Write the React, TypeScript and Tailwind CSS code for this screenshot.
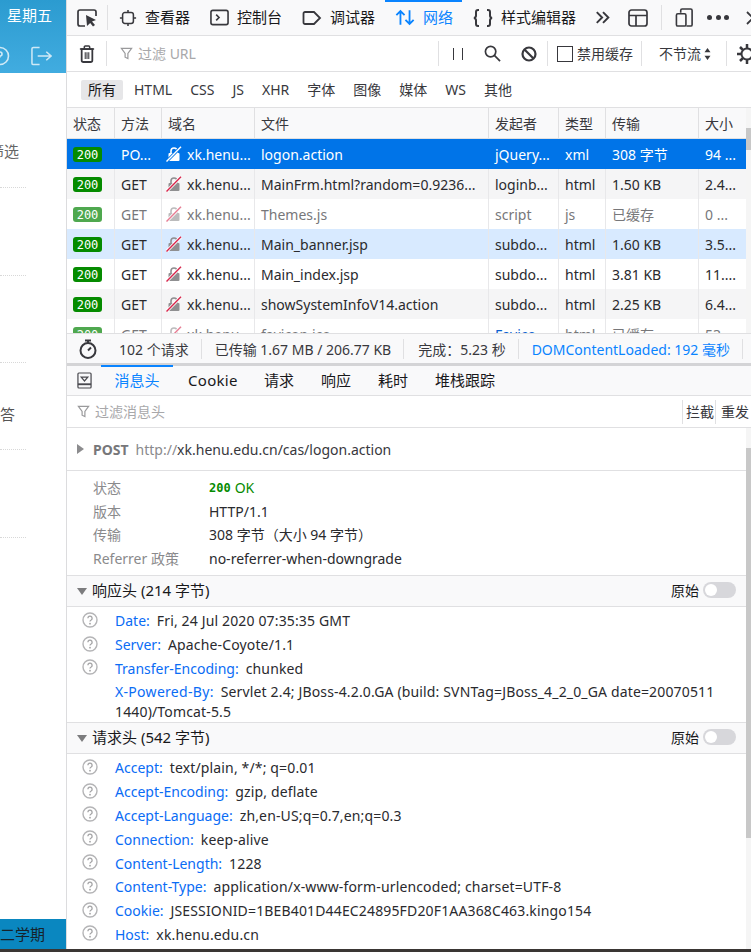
import React from "react";

const rows = [
  { method: "PO...", file: "logon.action", cause: "jQuery...", type: "xml", size: "308 字节", total: "94 ...", tone: "selected" },
  { method: "GET", file: "MainFrm.html?random=0.9236...", cause: "loginb...", type: "html", size: "1.50 KB", total: "2.4...", tone: "odd" },
  { method: "GET", file: "Themes.js", cause: "script", type: "js", size: "已缓存", total: "0 ...", tone: "cached" },
  { method: "GET", file: "Main_banner.jsp", cause: "subdo...", type: "html", size: "1.60 KB", total: "3.5...", tone: "hover" },
  { method: "GET", file: "Main_index.jsp", cause: "subdo...", type: "html", size: "3.81 KB", total: "11....", tone: "plain" },
  { method: "GET", file: "showSystemInfoV14.action", cause: "subdo...", type: "html", size: "2.25 KB", total: "6.4...", tone: "odd" },
  { method: "GET", file: "favicon.ico", cause: "Favico...", type: "html", size: "已缓存", total: "53...", tone: "cached" },
];

const responseHeaders = [
  ["Date:", "Fri, 24 Jul 2020 07:35:35 GMT"],
  ["Server:", "Apache-Coyote/1.1"],
  ["Transfer-Encoding:", "chunked"],
];

const requestHeaders = [
  ["Accept:", "text/plain, */*; q=0.01"],
  ["Accept-Encoding:", "gzip, deflate"],
  ["Accept-Language:", "zh,en-US;q=0.7,en;q=0.3"],
  ["Connection:", "keep-alive"],
  ["Content-Length:", "1228"],
  ["Content-Type:", "application/x-www-form-urlencoded; charset=UTF-8"],
  ["Cookie:", "JSESSIONID=1BEB401D44EC24895FD20F1AA368C463.kingo154"],
  ["Host:", "xk.henu.edu.cn"],
  ["Referer:", "http://xk.henu.edu.cn/"],
];

function Sep() {
  return <div className="w-px h-[25px] bg-[#e0e0e2] shrink-0" />;
}

function Funnel({ className }: { className: string }) {
  return (
    <svg viewBox="0 0 14 14" className={className} fill="none" stroke="#9a9a9c" strokeWidth="1.3">
      <path d="M1.5 1.5h11L8.5 7v5.5l-3-1.5V7z" />
    </svg>
  );
}

function Tool({ icon, label, active }: { icon: React.ReactNode; label: string; active?: boolean }) {
  return (
    <div className={`flex items-center gap-[8px] h-full ${active ? "text-[#0a84ff]" : "text-[#18181a]"}`}>
      {icon}
      <span className="text-[15px] whitespace-nowrap">{label}</span>
    </div>
  );
}

function Lock({ light, white }: { light?: boolean; white?: boolean }) {
  const body = white ? "#fff" : "#8f8f91";
  return (
    <svg viewBox="0 0 16 16" className={`w-[16px] h-[16px] shrink-0 ${light ? "opacity-60" : ""}`}>
      <path d="M5 7V5a3 3 0 0 1 6 0v2" fill="none" stroke={body} strokeWidth="1.6" />
      <rect x="2.5" y="7" width="11" height="8" rx="1" fill={body} />
      <path d="M0.5 15.5 15 0.8" stroke={white ? "#0074e8" : "#fff"} strokeWidth="3" />
      <path d="M0.5 15.5 15 0.8" stroke={white ? "#fff" : "#d7264c"} strokeWidth="1.4" />
    </svg>
  );
}

function Hint() {
  return (
    <svg viewBox="0 0 16 16" className="w-[16px] h-[16px] -mt-[2px] shrink-0" fill="none">
      <circle cx="8" cy="8" r="7" stroke="#b4b4b6" strokeWidth="1.4" />
      <path d="M5.9 6.2a2.1 2.1 0 1 1 3.2 1.8c-.7.4-1.1.8-1.1 1.6" stroke="#a4a4a6" strokeWidth="1.3" />
      <circle cx="8" cy="11.7" r=".9" fill="#a4a4a6" />
    </svg>
  );
}

function Toggle() {
  return <div className="w-[33px] h-[16px] rounded-full bg-[#d7d7db] p-[2px]"><div className="w-[12px] h-[12px] rounded-full bg-white" /></div>;
}

function Section({ title }: { title: string }) {
  return (
    <div className="h-[32px] shrink-0 flex items-center bg-[#f9f9fa] border-y border-[#e0e0e2] pl-[10px] pr-[10px] pb-[2px] text-[#18181a]">
      <svg viewBox="0 0 10 7" className="w-[10px] h-[7px] mr-[5px] mt-[2px]"><path d="M0 0h10L5 7z" fill="#7c7c7e" /></svg>
      <span className="flex-1 text-[15px]">{title}</span>
      <span className="mr-[4px] text-[14px]">原始</span>
      <Toggle />
    </div>
  );
}

function HeaderRow({ name, value }: { name: string; value: string }) {
  return (
    <div className="h-[23.8px] shrink-0 flex items-center pl-[15px] text-[14px] whitespace-nowrap">
      <Hint />
      <span className="ml-[17px] text-[#0a6cf5]">{name}</span>
      <span className="ml-[7px] text-[#2a2a2e] tracking-[0.15px]">{value}</span>
    </div>
  );
}

export default function App() {
  return (
    <div
      className="w-[751px] h-[952px] overflow-hidden flex flex-col bg-white"
      style={{ fontFamily: '"Noto Sans", "Noto Sans CJK SC", sans-serif' }}
    >
      <div className="flex flex-1 min-h-0">
        {/* left page, mostly hidden by devtools */}
        <aside className="w-[66px] shrink-0 flex flex-col bg-white">
          <div className="h-[73px] bg-gradient-to-b from-[#2b9bd0] to-[#41ace0] text-white">
            <div className="h-[30px] flex items-center justify-end pr-[14px] text-[15px]">星期五</div>
            <div className="flex items-center justify-between h-[43px] pt-[8px] pr-[14px] -ml-[10px]">
              <svg viewBox="0 0 20 20" className="w-[20px] h-[20px]" fill="none" stroke="#cfe9f6" strokeWidth="1.6"><circle cx="10" cy="10" r="8.5" /><path d="M8 8a2 2 0 1 1 2 2v1.5" /></svg>
              <svg viewBox="0 0 22 20" className="w-[21px] h-[20px]" fill="none" stroke="#cfe9f6" strokeWidth="1.6"><path d="M9 1H2.5A1.5 1.5 0 0 0 1 2.5v15A1.5 1.5 0 0 0 2.5 19H9M7 10h14M16 5.5l5 4.5-5 4.5" /></svg>
            </div>
          </div>
          <div className="flex-1 flex flex-col">
            <div className="h-[115px] shrink-0 mr-[40px] border-b border-dotted border-[#d8d8d8] flex items-center justify-end pt-[43px] pr-[7px] text-[15px] text-[#666] overflow-hidden whitespace-nowrap">筛选</div>
            <div className="h-[88px] shrink-0 mr-[40px] border-b border-dotted border-[#d8d8d8]" />
            <div className="h-[87px] shrink-0 mr-[40px] border-b border-dotted border-[#d8d8d8]" />
            <div className="h-[87px] shrink-0 mr-[40px] border-b border-dotted border-[#d8d8d8] flex items-center justify-end pt-[17px] pr-[11px] text-[15px] text-[#555] overflow-hidden whitespace-nowrap">答</div>
            <div className="h-[88px] shrink-0 mr-[40px] border-b border-dotted border-[#d8d8d8]" />
            <div className="flex-1" />
            <div className="h-[30px] bg-[#0a87c0] flex items-center justify-end pr-[21px] text-[15px] text-[#16222a] overflow-hidden whitespace-nowrap">二学期</div>
          </div>
        </aside>

        {/* devtools */}
        <main className="flex-1 min-w-0 flex flex-col border-l border-[#dcdcde] overflow-hidden">
          <div className="h-[36px] shrink-0 flex items-center bg-[#f9f9fa] border-b border-[#e0e0e2] pl-[10px] overflow-hidden">
            <svg viewBox="0 0 20 20" className="w-[20px] h-[20px] shrink-0 mr-[10px]" fill="none"><path d="M8 18H3a2 2 0 0 1-2-2V4a2 2 0 0 1 2-2h14a2 2 0 0 1 2 2v4" stroke="#38383d" strokeWidth="1.7" /><path d="M9 7l10 5-4 1.5 3 3.5-2 1.5-2.8-3.5L10 18z" fill="#38383d" /></svg>
            <Sep />
            <div className="flex items-center h-full gap-[20px] ml-[11px] shrink-0">
              <Tool label="查看器" icon={<svg viewBox="0 0 20 20" className="w-[18px] h-[18px]" fill="none" stroke="#38383d" strokeWidth="1.7"><rect x="4" y="4" width="12" height="12" rx="2.5" /><path d="M10 1v3M10 16v3M1 10h3M16 10h3" /></svg>} />
              <Tool label="控制台" icon={<svg viewBox="0 0 20 20" className="w-[19px] h-[19px]" fill="none" stroke="#38383d" strokeWidth="1.7"><rect x="1" y="2.5" width="18" height="15" rx="2" /><path d="M6.5 7l3 3-3 3" /></svg>} />
              <Tool label="调试器" icon={<svg viewBox="0 0 20 20" className="w-[20px] h-[20px]" fill="none" stroke="#38383d" strokeWidth="1.8"><path d="M3 4h9l6 6-6 6H3a1.5 1.5 0 0 1-1.5-1.5v-9A1.5 1.5 0 0 1 3 4z" /></svg>} />
              <div className="relative h-full flex items-center">
                <div className="absolute top-0 left-[-10px] right-[-9px] h-[2px] bg-[#0a84ff]" />
                <Tool active label="网络" icon={<svg viewBox="0 0 22 20" className="w-[20px] h-[19px]" fill="none" stroke="#0a84ff" strokeWidth="2"><path d="M6 18V3M1.5 7.5 6 3l4.5 4.5M16 2v15M11.5 12.5 16 17l4.5-4.5" /></svg>} />
              </div>
              <Tool label="样式编辑器" icon={<svg viewBox="0 0 20 18" className="w-[20px] h-[18px]" fill="none" stroke="#38383d" strokeWidth="2"><path d="M6 1H5a2 2 0 0 0-2 2v3.5a2.5 2.5 0 0 1-2 2.5 2.5 2.5 0 0 1 2 2.5V15a2 2 0 0 0 2 2h1M14 1h1a2 2 0 0 1 2 2v3.5a2.5 2.5 0 0 0 2 2.5 2.5 2.5 0 0 0-2 2.5V15a2 2 0 0 1-2 2h-1" /></svg>} />
            </div>
            <svg viewBox="0 0 18 16" className="w-[16px] h-[15px] shrink-0 ml-[19px]" fill="none" stroke="#38383d" strokeWidth="2.2"><path d="M2 2l6 6-6 6M9 2l6 6-6 6" /></svg>
            <svg viewBox="0 0 20 18" className="w-[20px] h-[18px] shrink-0 ml-[17px]" fill="none" stroke="#38383d" strokeWidth="1.7"><rect x="1" y="1" width="18" height="16" rx="2.5" /><path d="M1 6.5h18M8 6.5V17" /></svg>
            <div className="ml-[13px]"><Sep /></div>
            <svg viewBox="0 0 20 20" className="w-[19px] h-[19px] shrink-0 ml-[13px]" fill="none" stroke="#38383d" strokeWidth="1.7"><path d="M6 5V2.5A1.5 1.5 0 0 1 7.5 1h9A1.5 1.5 0 0 1 18 2.5v15a1.5 1.5 0 0 1-1.5 1.5H12" /><rect x="1.5" y="6" width="10" height="13" rx="1.5" /></svg>
            <div className="flex gap-[3.5px] ml-[13px] shrink-0">
              <div className="w-[5px] h-[5px] rounded-full bg-[#38383d]" />
              <div className="w-[5px] h-[5px] rounded-full bg-[#38383d]" />
              <div className="w-[5px] h-[5px] rounded-full bg-[#38383d]" />
            </div>
            <svg viewBox="0 0 14 14" className="w-[14px] h-[14px] shrink-0 ml-[17px]" fill="none" stroke="#38383d" strokeWidth="1.8"><path d="M1 1l12 12M13 1 1 13" /></svg>
          </div>

          <div className="h-[36px] shrink-0 flex items-center border-b border-[#e0e0e2] pl-[12px] overflow-hidden">
            <svg viewBox="0 0 18 20" className="w-[16px] h-[20px] shrink-0 mr-[11px]" fill="none" stroke="#38383d" strokeWidth="1.7"><path d="M1 4.5h16M6 4.5V2a1 1 0 0 1 1-1h4a1 1 0 0 1 1 1v2.5" /><path d="M3 4.5h12V17a2 2 0 0 1-2 2H5a2 2 0 0 1-2-2z" strokeWidth="2" /><path d="M7 8v7.5M9 8v7.5M11 8v7.5" strokeWidth="1.2" /></svg>
            <Sep />
            <div className="flex items-center w-[318px] shrink-0 ml-[13px] text-[14px] text-[#a8a8aa]">
              <Funnel className="w-[13px] h-[13px] mr-[5px]" />
              过滤 URL
            </div>
            <Sep />
            <div className="flex gap-[8px] ml-[14px] shrink-0">
              <div className="w-px h-[12px] bg-[#38383d]" />
              <div className="w-px h-[12px] bg-[#38383d]" />
            </div>
            <svg viewBox="0 0 18 18" className="w-[17px] h-[17px] shrink-0 ml-[21px]" fill="none" stroke="#38383d" strokeWidth="1.8"><circle cx="7" cy="7" r="5.5" /><path d="M11 11l6 6" /></svg>
            <svg viewBox="0 0 16 16" className="w-[16px] h-[16px] shrink-0 ml-[20px]" fill="none" stroke="#38383d" strokeWidth="2.2"><circle cx="8" cy="8" r="6.5" /><path d="M3.5 3.5l9 9" /></svg>
            <div className="ml-[10px]"><Sep /></div>
            <div className="w-[16px] h-[16px] border border-[#38383d] ml-[9px] shrink-0 bg-white" />
            <span className="ml-[4px] text-[14px] text-[#38383d] whitespace-nowrap">禁用缓存</span>
            <div className="ml-[8px]"><Sep /></div>
            <span className="ml-[17px] text-[14px] text-[#38383d] whitespace-nowrap">不节流</span>
            <svg viewBox="0 0 8 14" className="w-[7px] h-[12px] shrink-0 ml-[3px]"><path d="M4 0l3.5 5h-7zM4 14 .5 9h7z" fill="#38383d" /></svg>
            <div className="ml-[15px]"><Sep /></div>
            <svg viewBox="0 0 20 20" className="w-[20px] h-[20px] shrink-0 ml-[10px]" fill="none" stroke="#38383d"><circle cx="10" cy="10" r="5.5" strokeWidth="2" /><path d="M10 0v4M10 16v4M0 10h4M16 10h4M3 3l3 3M14 14l3 3M17 3l-3 3M6 14l-3 3" strokeWidth="2.5" /></svg>
          </div>

          <div className="h-[36px] shrink-0 flex items-center gap-[11px] pl-[14px] border-b border-[#e0e0e2] text-[14px] text-[#38383d]">
            <span className="bg-[#e6e6e8] rounded-[2px] px-[7px] h-[20px] flex items-center text-[#18181a]">所有</span>
            <div className="flex gap-[18px]">
              {["HTML", "CSS", "JS", "XHR", "字体", "图像", "媒体", "WS", "其他"].map((f) => (
                <span key={f}>{f}</span>
              ))}
            </div>
          </div>

          {/* requests table */}
          <div className="h-[225px] shrink-0 overflow-hidden flex">
            <div className="flex-1 min-w-0">
              <div className="grid grid-cols-[48px_47px_93px_234px_70px_47px_93px_1fr] h-[31px] bg-[#f9f9fa] border-b border-[#e0e0e2] text-[14px] text-[#38383d]">
                {["状态", "方法", "域名", "文件", "发起者", "类型", "传输", "大小"].map((h, i) => (
                  <div key={h} className={`flex items-center pl-[6px] ${i < 7 ? "border-r border-[#e0e0e2]" : ""}`}>{h}</div>
                ))}
              </div>
              {rows.map((r, i) => {
                const selected = r.tone === "selected";
                const cached = r.tone === "cached";
                const bg = selected ? "bg-[#0074e8]" : r.tone === "hover" ? "bg-[#d8eaff]" : r.tone === "odd" ? "bg-[#f5f5f6]" : "bg-white";
                const color = selected ? "text-white" : cached ? "text-[#77777a]" : "text-[#2a2a2e]";
                const line = selected ? "" : "border-r border-[#e8e8ea]";
                return (
                  <div key={i} className={`grid grid-cols-[48px_47px_93px_234px_70px_47px_93px_1fr] h-[30px] text-[14px] whitespace-nowrap ${bg} ${color}`}>
                    <div className={`flex items-center pl-[6px] ${line}`}>
                      <span className={`w-[29px] h-[15px] mt-[1px] rounded-[3px] flex items-center justify-center text-white text-[12px] ${cached ? "bg-[#4fa84f]" : "bg-[#058b00]"}`} style={{ fontFamily: '"DejaVu Sans Mono", monospace' }}>200</span>
                    </div>
                    <div className={`flex items-center pl-[6px] ${line}`}>{r.method}</div>
                    <div className={`flex items-center pl-[4px] gap-[5px] ${line}`}>
                      <Lock light={cached} white={selected} />
                      <span>xk.henu...</span>
                    </div>
                    <div className={`flex items-center pl-[6px] overflow-hidden ${line}`}>{r.file}</div>
                    <div className={`flex items-center pl-[6px] ${line} ${!selected && i === 6 ? "text-[#0a5fd0]" : ""}`}>{r.cause}</div>
                    <div className={`flex items-center pl-[6px] ${line}`}>{r.type}</div>
                    <div className={`flex items-center pl-[6px] ${line}`}>{r.size}</div>
                    <div className="flex items-center pl-[6px]">{r.total}</div>
                  </div>
                );
              })}
            </div>
            <div className="w-[5px] shrink-0 bg-[#f5f5f5] pt-[20px]">
              <div className="h-[22px] bg-[#c8c8c8]" />
            </div>
          </div>

          {/* status bar */}
          <div className="h-[30px] shrink-0 flex items-center bg-[#f9f9fa] border-t border-[#e0e0e2] pl-[12px] pt-[1px] text-[14px] text-[#38383d] whitespace-nowrap">
            <svg viewBox="0 0 18 20" className="w-[18px] h-[20px] shrink-0 mr-[22px]" fill="none" stroke="#38383d" strokeWidth="2"><circle cx="9" cy="11.5" r="7.5" /><path d="M6 1.5h6M9 1.5v2.5M9 11.5l3-3" /></svg>
            <span>102 个请求</span>
            <div className="ml-[12px] mr-[13px] w-px h-[20px] bg-[#e0e0e2]" />
            <span>已传输 1.67 MB / 206.77 KB</span>
            <div className="ml-[12px] mr-[14px] w-px h-[20px] bg-[#e0e0e2]" />
            <span>完成：5.23 秒</span>
            <div className="ml-[12px] mr-[13px] w-px h-[20px] bg-[#e0e0e2]" />
            <span className="text-[#0a84ff]">DOMContentLoaded: 192 毫秒</span>
            <div className="ml-[12px] w-px h-[20px] bg-[#e0e0e2]" />
          </div>
          <div className="h-[3px] shrink-0 bg-[#d4d4d6]" />

          {/* detail tabs */}
          <div className="h-[30px] shrink-0 flex items-center bg-[#f9f9fa] border-b border-[#e0e0e2] text-[15px] text-[#18181a] whitespace-nowrap">
            <svg viewBox="0 0 16 18" className="w-[15px] h-[17px] shrink-0 ml-[10px] mr-[9px]" fill="none" stroke="#4a4a4f" strokeWidth="1.3"><rect x="1" y="1" width="14" height="16" rx="1" /><path d="M1 13h14" strokeWidth="2" /><path d="M4.5 5.5h7L8 9.5z" /></svg>
            <div className="relative h-full w-[72px] flex items-center justify-center text-[#0a84ff]">
              <div className="absolute top-0 inset-x-0 h-[2px] -mt-[1px] bg-[#0a84ff]" />
              消息头
            </div>
            <div className="flex gap-[27px] ml-[15px]">
              <span className="w-[49px] tracking-[0.3px]">Cookie</span>
              <span>请求</span>
              <span>响应</span>
              <span>耗时</span>
              <span>堆栈跟踪</span>
            </div>
          </div>

          <div className="h-[32px] shrink-0 flex items-center border-b border-[#e0e0e2] pl-[10px] pr-[2px] text-[14px] whitespace-nowrap">
            <Funnel className="w-[13px] h-[13px] mr-[5px]" />
            <span className="flex-1 text-[#a8a8aa]">过滤消息头</span>
            <div className="h-[24px] w-px bg-[#e0e0e2]" />
            <span className="ml-[3px] mr-[1px] text-[#38383d]">拦截</span>
            <div className="h-[24px] w-px bg-[#e0e0e2]" />
            <span className="ml-[5px] text-[#38383d]">重发</span>
          </div>

          {/* headers panel */}
          <div className="flex-1 min-h-0 flex overflow-hidden">
            <div className="flex-1 min-w-0 flex flex-col">
              <div className="h-[43px] shrink-0 flex items-center border-b border-[#e0e0e2] pl-[10px] text-[14px] whitespace-nowrap">
                <svg viewBox="0 0 7 10" className="w-[7px] h-[10px] mr-[9px]"><path d="M0 0l7 5-7 5z" fill="#8c8c8e" /></svg>
                <span className="font-bold text-[#77777a] mr-[7px]">POST</span>
                <span className="text-[#8a8a8c]">http://</span>
                <span className="text-[#38383d]">xk.henu.edu.cn/cas/logon.action</span>
              </div>

              <div className="h-[104px] shrink-0 flex flex-col justify-center pl-[26px] text-[14px] whitespace-nowrap">
                {[["状态", ""], ["版本", "HTTP/1.1"], ["传输", "308 字节（大小 94 字节）"], ["Referrer 政策", "no-referrer-when-downgrade"]].map(([k, v]) => (
                  <div key={k} className="grid grid-cols-[116px_1fr] h-[23.4px] items-center">
                    <span className="text-[#8a8a8c]">{k}</span>
                    {k === "状态" ? (
                      <span className="flex items-center gap-[4px] text-[#058b00]">
                        <span className="text-[12px] font-bold" style={{ fontFamily: '"DejaVu Sans Mono", monospace' }}>200</span>OK
                      </span>
                    ) : (
                      <span className="text-[#2a2a2e]">{v}</span>
                    )}
                  </div>
                ))}
              </div>

              <Section title="响应头 (214 字节)" />
              <div className="h-[115px] flex flex-col pt-[2px] shrink-0">
                {responseHeaders.map(([n, v]) => <HeaderRow key={n} name={n} value={v} />)}
                <div className="pl-[48px] pr-[20px] pt-[2px] text-[14px] leading-[20px] text-[#2a2a2e] tracking-[0.15px]">
                  <span className="text-[#0a6cf5] mr-[7px] tracking-[0.3px]">X-Powered-By:</span>
                  Servlet 2.4; JBoss-4.2.0.GA (build: SVNTag=JBoss_4_2_0_GA date=20070511 1440)/Tomcat-5.5
                </div>
              </div>
              <Section title="请求头 (542 字节)" />
              <div className="flex flex-col pt-[2px] shrink-0">
                {requestHeaders.map(([n, v]) => <HeaderRow key={n} name={n} value={v} />)}
              </div>
            </div>
            <div className="w-[5px] shrink-0 bg-[#f5f5f5] pt-[20px]">
              <div className="h-[390px] bg-[#c8c8c8]" />
            </div>
          </div>
        </main>
      </div>
      <div className="h-[3px] shrink-0 bg-[#3a3634]" />
    </div>
  );
}
